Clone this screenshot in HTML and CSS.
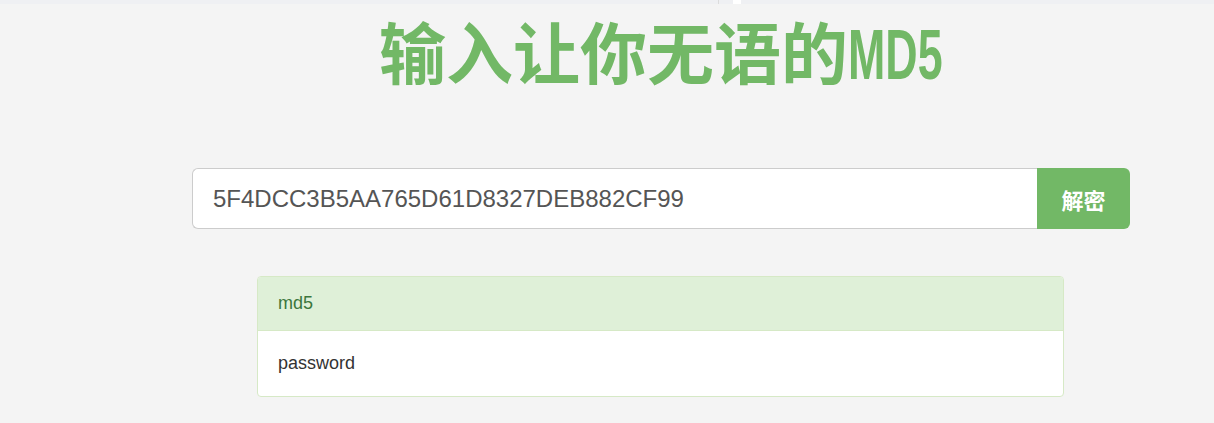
FILE: index.html
```html
<!DOCTYPE html>
<html lang="zh-CN">
<head>
    <meta charset="UTF-8">
    <meta name="viewport" content="width=device-width, initial-scale=1.0">
    <title>输入让你无语的MD5</title>
    <link rel="stylesheet" href="styles.css">
</head>
<body>
<div class="topbar">
    <span class="tab-line"></span>
    <span class="tab-block"></span>
</div>
<div class="container">
    <h1 class="title">输入让你无语的<span class="title-latin">MD5</span></h1>
    <div class="search">
        <input class="search-input" type="text" value="5F4DCC3B5AA765D61D8327DEB882CF99">
        <button class="search-btn">解密</button>
    </div>
    <div class="result">
        <div class="result-head">md5</div>
        <div class="result-body">password</div>
    </div>
</div>
</body>
</html>
```

FILE: styles.css
```css
body {
    margin: 0;
    background: #f4f4f4;
    font-family: 'Liberation Sans', Arial, 'Noto Sans CJK SC', sans-serif;
    color: #333;
}

.topbar {
    height: 4px;
    background: #eff0f3;
    display: flex;
}

.tab-line {
    width: 1px;
    height: 4px;
    margin-left: 718px;
    background: #dcdcdc;
}

.tab-block {
    width: 8px;
    height: 4px;
    margin-left: 14px;
    background: #fff;
}

.container {
    width: 938px;
    margin-left: 192px;
}

.title {
    margin: 8px 0 0;
    height: 76px;
    text-align: center;
    font-family: 'Noto Sans CJK SC', sans-serif;
    font-size: 67px;
    font-weight: 700;
    line-height: 76px;
    color: #72b866;
}

/* 标题里的 MD5 是窄的半角字 */
.title-latin {
    display: inline-block;
    font-family: 'Liberation Sans', Arial, sans-serif;
    font-size: 70px;
    transform: scaleX(0.64);
    transform-origin: left bottom;
    margin-right: -53px;
}

.search {
    display: flex;
    margin-top: 80px;
    height: 61px;
}

.search-input {
    flex: 1;
    box-sizing: border-box;
    height: 61px;
    padding: 0 20px;
    font-family: 'Liberation Sans', Arial, sans-serif;
    font-size: 24px;
    color: #555;
    background: #fff;
    border: 1px solid #ccc;
    border-right: none;
    border-radius: 6px 0 0 6px;
    outline: none;
}

.search-btn {
    width: 93px;
    height: 61px;
    border: none;
    border-radius: 0 6px 6px 0;
    background: #72b866;
    color: #fff;
    font-family: 'Noto Sans CJK SC', sans-serif;
    font-size: 22px;
    font-weight: 700;
    cursor: pointer;
}

.result {
    margin: 47px 66px 0 65px;
    background: #fff;
    border: 1px solid #d6e9c6;
    border-radius: 4px;
    overflow: hidden;
}

.result-head {
    height: 53px;
    line-height: 53px;
    padding: 0 20px;
    background: #dff0d8;
    border-bottom: 1px solid #d6e9c6;
    color: #3c763d;
    font-size: 18px;
}

.result-body {
    height: 65px;
    line-height: 65px;
    padding: 0 20px;
    font-size: 18px;
    color: #333;
}
```
